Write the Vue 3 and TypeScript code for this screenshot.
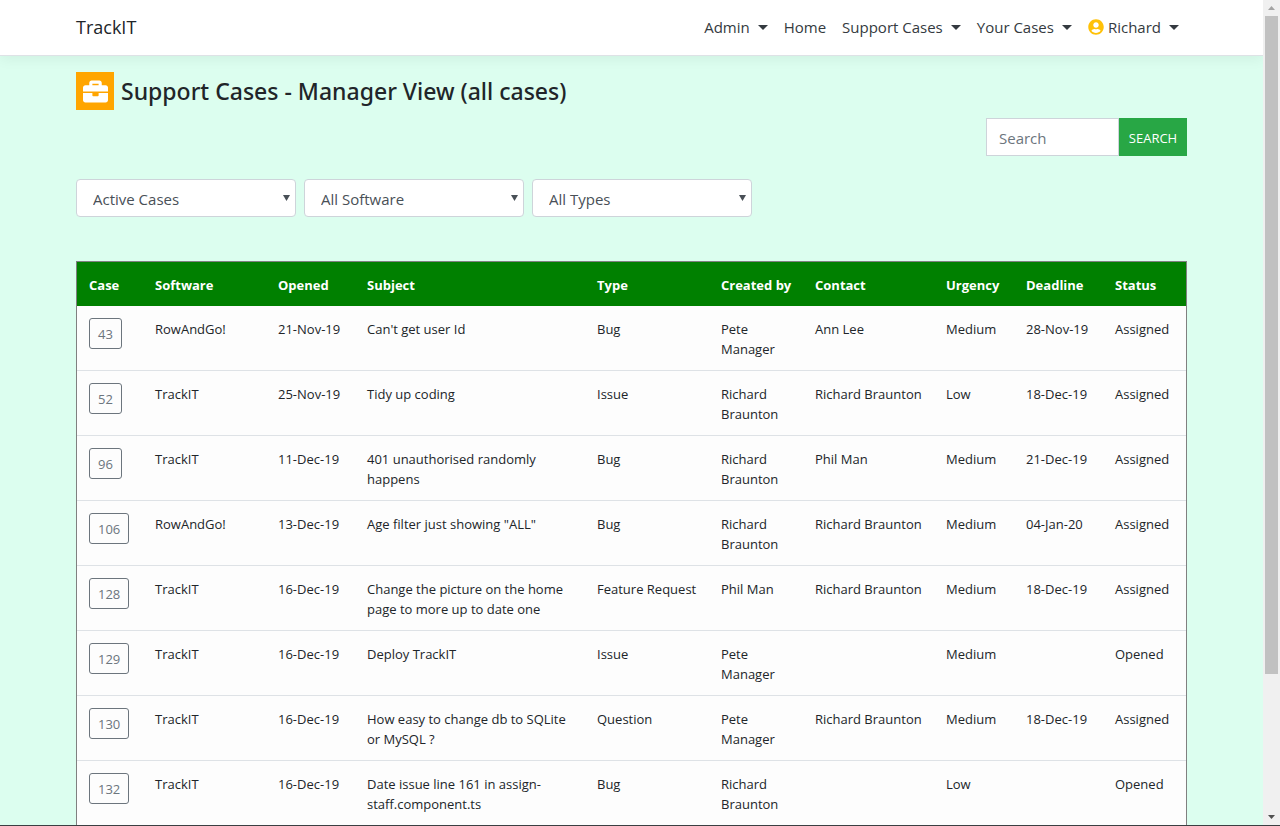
<script setup lang="ts">
interface NavItem {
  label: string
  menu: boolean
  user?: boolean
}

interface SupportCase {
  id: number
  software: string
  opened: string
  subject: string
  type: string
  createdBy: string
  contact: string
  urgency: string
  deadline: string
  status: string
}

const navItems: NavItem[] = [
  { label: 'Admin', menu: true },
  { label: 'Home', menu: false },
  { label: 'Support Cases', menu: true },
  { label: 'Your Cases', menu: true },
  { label: 'Richard', menu: true, user: true },
]

const filters = [
  { id: 'filter-status', name: 'Case status', options: ['Active Cases'] },
  { id: 'filter-software', name: 'Software', options: ['All Software'] },
  { id: 'filter-type', name: 'Case type', options: ['All Types'] },
]

const columns = [
  { key: 'case', label: 'Case' },
  { key: 'software', label: 'Software' },
  { key: 'opened', label: 'Opened' },
  { key: 'subject', label: 'Subject' },
  { key: 'type', label: 'Type' },
  { key: 'created', label: 'Created by' },
  { key: 'contact', label: 'Contact' },
  { key: 'urgency', label: 'Urgency' },
  { key: 'deadline', label: 'Deadline' },
  { key: 'status', label: 'Status' },
]

const cases: SupportCase[] = [
  { id: 43, software: 'RowAndGo!', opened: '21-Nov-19', subject: "Can't get user Id", type: 'Bug', createdBy: 'Pete Manager', contact: 'Ann Lee', urgency: 'Medium', deadline: '28-Nov-19', status: 'Assigned' },
  { id: 52, software: 'TrackIT', opened: '25-Nov-19', subject: 'Tidy up coding', type: 'Issue', createdBy: 'Richard Braunton', contact: 'Richard Braunton', urgency: 'Low', deadline: '18-Dec-19', status: 'Assigned' },
  { id: 96, software: 'TrackIT', opened: '11-Dec-19', subject: '401 unauthorised randomly happens', type: 'Bug', createdBy: 'Richard Braunton', contact: 'Phil Man', urgency: 'Medium', deadline: '21-Dec-19', status: 'Assigned' },
  { id: 106, software: 'RowAndGo!', opened: '13-Dec-19', subject: 'Age filter just showing "ALL"', type: 'Bug', createdBy: 'Richard Braunton', contact: 'Richard Braunton', urgency: 'Medium', deadline: '04-Jan-20', status: 'Assigned' },
  { id: 128, software: 'TrackIT', opened: '16-Dec-19', subject: 'Change the picture on the home page to more up to date one', type: 'Feature Request', createdBy: 'Phil Man', contact: 'Richard Braunton', urgency: 'Medium', deadline: '18-Dec-19', status: 'Assigned' },
  { id: 129, software: 'TrackIT', opened: '16-Dec-19', subject: 'Deploy TrackIT', type: 'Issue', createdBy: 'Pete Manager', contact: '', urgency: 'Medium', deadline: '', status: 'Opened' },
  { id: 130, software: 'TrackIT', opened: '16-Dec-19', subject: 'How easy to change db to SQLite or MySQL ?', type: 'Question', createdBy: 'Pete Manager', contact: 'Richard Braunton', urgency: 'Medium', deadline: '18-Dec-19', status: 'Assigned' },
  { id: 132, software: 'TrackIT', opened: '16-Dec-19', subject: 'Date issue line 161 in assign-staff.component.ts', type: 'Bug', createdBy: 'Richard Braunton', contact: '', urgency: 'Low', deadline: '', status: 'Opened' },
]
</script>

<template>
  <div class="shell">
    <div class="page">
      <header class="navbar">
        <div class="container navbar-inner">
          <a class="brand" href="#">TrackIT</a>
          <nav class="nav" aria-label="Main">
            <a v-for="item in navItems" :key="item.label" class="nav-link" href="#">
              <svg v-if="item.user" class="user-icon" viewBox="0 0 496 512" aria-hidden="true">
                <path fill-rule="evenodd" d="M248 8C111 8 0 119 0 256s111 248 248 248 248-111 248-248S385 8 248 8zm0 96c48.600 0 88 39.400 88 88s-39.400 88-88 88-88-39.400-88-88 39.400-88 88-88zm0 344c-58.700 0-111.300-26.600-146.500-68.200 18.800-35.400 55.600-59.800 98.500-59.800 2.400 0 4.800.4 7.100 1.100 13 4.200 26.600 6.900 40.900 6.900 14.300 0 28-2.700 40.900-6.900 2.300-.7 4.700-1.100 7.100-1.100 42.900 0 79.700 24.400 98.500 59.800C359.300 421.400 306.700 448 248 448z" />
              </svg>
              <span>{{ item.label }}</span>
              <span v-if="item.menu" class="caret"></span>
            </a>
          </nav>
        </div>
      </header>

      <main class="container content">
        <h1 class="title">
          <span class="title-icon">
            <svg viewBox="0 0 512 512" aria-hidden="true">
              <path d="M320 336c0 8.840-7.160 16-16 16h-96c-8.840 0-16-7.160-16-16v-48H0v144c0 25.600 22.400 48 48 48h416c25.600 0 48-22.400 48-48V288H320v48zm144-208h-80V80c0-25.600-22.400-48-48-48H176c-25.600 0-48 22.400-48 48v48H48c-25.600 0-48 22.400-48 48v80h512v-80c0-25.600-22.400-48-48-48zm-144 0H192V96h128v32z" />
            </svg>
          </span>
          <span>Support Cases - Manager View (all cases)</span>
        </h1>

        <form class="search" @submit.prevent>
          <input class="search-input" type="search" placeholder="Search" aria-label="Search" />
          <button class="search-button" type="submit">SEARCH</button>
        </form>

        <div class="filters">
          <div v-for="filter in filters" :key="filter.id" class="filter">
            <select :id="filter.id" :aria-label="filter.name">
              <option v-for="option in filter.options" :key="option">{{ option }}</option>
            </select>
            <svg class="filter-arrow" viewBox="0 0 7 6" aria-hidden="true"><path d="M0 0h7L3.500 6z" /></svg>
          </div>
        </div>

        <table class="cases">
          <colgroup>
            <col v-for="column in columns" :key="column.key" :class="'col-' + column.key" />
          </colgroup>
          <thead>
            <tr>
              <th v-for="column in columns" :key="column.key" scope="col">{{ column.label }}</th>
            </tr>
          </thead>
          <tbody>
            <tr v-for="row in cases" :key="row.id">
              <td class="case-cell"><button class="case-button" type="button">{{ row.id }}</button></td>
              <td>{{ row.software }}</td>
              <td>{{ row.opened }}</td>
              <td>{{ row.subject }}</td>
              <td>{{ row.type }}</td>
              <td>{{ row.createdBy }}</td>
              <td class="contact-cell">{{ row.contact }}</td>
              <td>{{ row.urgency }}</td>
              <td>{{ row.deadline }}</td>
              <td>{{ row.status }}</td>
            </tr>
          </tbody>
        </table>
      </main>
    </div>

    <div class="scrollbar" aria-hidden="true">
      <svg class="scroll-arrow muted" viewBox="0 0 7 4"><path d="M0 4h7L3.500 0z" /></svg>
      <div class="scroll-track"><div class="scroll-thumb"></div></div>
      <svg class="scroll-arrow" viewBox="0 0 7 4"><path d="M0 0h7L3.500 4z" /></svg>
    </div>
  </div>
</template>

<style>
body {
  margin: 0;
  background: #dcfeef;
}
</style>

<style scoped>
* {
  box-sizing: border-box;
}

.shell {
  display: grid;
  grid-template-columns: minmax(0, 1fr) 17px;
  height: 100vh;
  overflow: hidden;
  border-bottom: 1px solid #3b3f42;
  background: #dcfeef;
  color: #212529;
  font-family: "Open Sans", "Noto Sans", sans-serif;
  font-size: 15px;
  line-height: 24px;
}

.page {
  overflow: hidden;
}

.container {
  width: calc(100% - 30px);
  max-width: 1111px;
  margin: 0 auto;
}

.navbar {
  border-bottom: 1px solid #dee2e6;
  background: #fff;
  box-shadow: 0 4px 12px rgba(0, 0, 0, 0.05);
}

.navbar-inner {
  display: flex;
  align-items: center;
  justify-content: space-between;
  height: 55px;
  padding-bottom: 1px;
}

.brand {
  color: #212529;
  font-size: 18px;
  text-decoration: none;
}

.nav {
  display: flex;
}

.nav-link {
  display: flex;
  align-items: center;
  padding: 8px;
  color: #343a40;
  text-decoration: none;
}

.user-icon {
  width: 16px;
  height: 16px;
  margin-right: 4px;
  fill: #ffc107;
}

.caret {
  margin-left: 8px;
  border-top: 5px solid #343a40;
  border-right: 5px solid transparent;
  border-left: 5px solid transparent;
}

.content {
  padding-top: 16px;
}

.title {
  display: flex;
  align-items: center;
  gap: 7px;
  margin: 0 0 8px;
  font-family: "Noto Sans", "Open Sans", sans-serif;
  font-size: 23px;
  font-weight: 500;
  line-height: 38px;
}

.title-icon {
  display: flex;
  align-items: center;
  justify-content: center;
  width: 38px;
  height: 38px;
  background: orange;
}

.title-icon svg {
  width: 25px;
  height: 25px;
  fill: #fff;
}

.search {
  display: flex;
  justify-content: flex-end;
  margin-bottom: 23px;
}

.search-input {
  width: 133px;
  height: 38px;
  padding: 7px 12px 5px;
  border: 1px solid #ced4da;
  border-radius: 0;
  background: #fff;
  color: #495057;
  font: inherit;
  appearance: none;
}

.search-input::placeholder {
  color: #6c757d;
  opacity: 1;
}

.search-button {
  width: 68px;
  height: 38px;
  padding: 2px 0 0;
  border: 0;
  background: #28a745;
  color: #fff;
  font: inherit;
  font-size: 13px;
}

.filters {
  display: flex;
  gap: 8px;
  margin-bottom: 44px;
}

.filter {
  position: relative;
  width: 220px;
}

.filter select {
  display: block;
  width: 100%;
  height: 38px;
  padding: 7px 16px 5px;
  border: 1px solid #ced4da;
  border-radius: 4px;
  background: #fff;
  color: #495057;
  font: inherit;
  appearance: none;
}

.filter-arrow {
  position: absolute;
  top: 16px;
  right: 6px;
  width: 7px;
  height: 6px;
  fill: #495057;
  pointer-events: none;
}

.cases {
  width: 100%;
  border: 1px solid #808080;
  border-spacing: 0;
  table-layout: fixed;
  background: #fdfdfd;
  font-size: 13px;
  line-height: 20px;
}

.cases th,
.cases td {
  padding: 13px 12px 11px;
  text-align: left;
  vertical-align: top;
}

.cases th {
  background: green;
  color: #fff;
  font-weight: 700;
  white-space: nowrap;
}

.cases td {
  border-bottom: 1px solid #dee2e6;
}

.cases .case-cell {
  padding: 12px;
}

.cases .contact-cell {
  white-space: nowrap;
}

.case-button {
  display: block;
  height: 31px;
  padding: 0 8px;
  border: 1px solid #6c757d;
  border-radius: 3px;
  background: transparent;
  color: #6c757d;
  font: inherit;
}

.col-case { width: 66px; }
.col-software { width: 123px; }
.col-opened { width: 89px; }
.col-type { width: 124px; }
.col-created { width: 94px; }
.col-contact { width: 131px; }
.col-urgency { width: 80px; }
.col-deadline { width: 89px; }
.col-status { width: 83px; }

.scrollbar {
  display: flex;
  flex-direction: column;
  align-items: center;
  background: #f0f0f0;
}

.scroll-arrow {
  width: 7px;
  height: 4px;
  margin: 6px 0;
  fill: #505050;
}

.scroll-arrow.muted {
  fill: #a3a3a3;
}

.scroll-track {
  flex: 1;
  width: 13px;
}

.scroll-thumb {
  height: 83%;
  background: #c1c1c1;
}
</style>
